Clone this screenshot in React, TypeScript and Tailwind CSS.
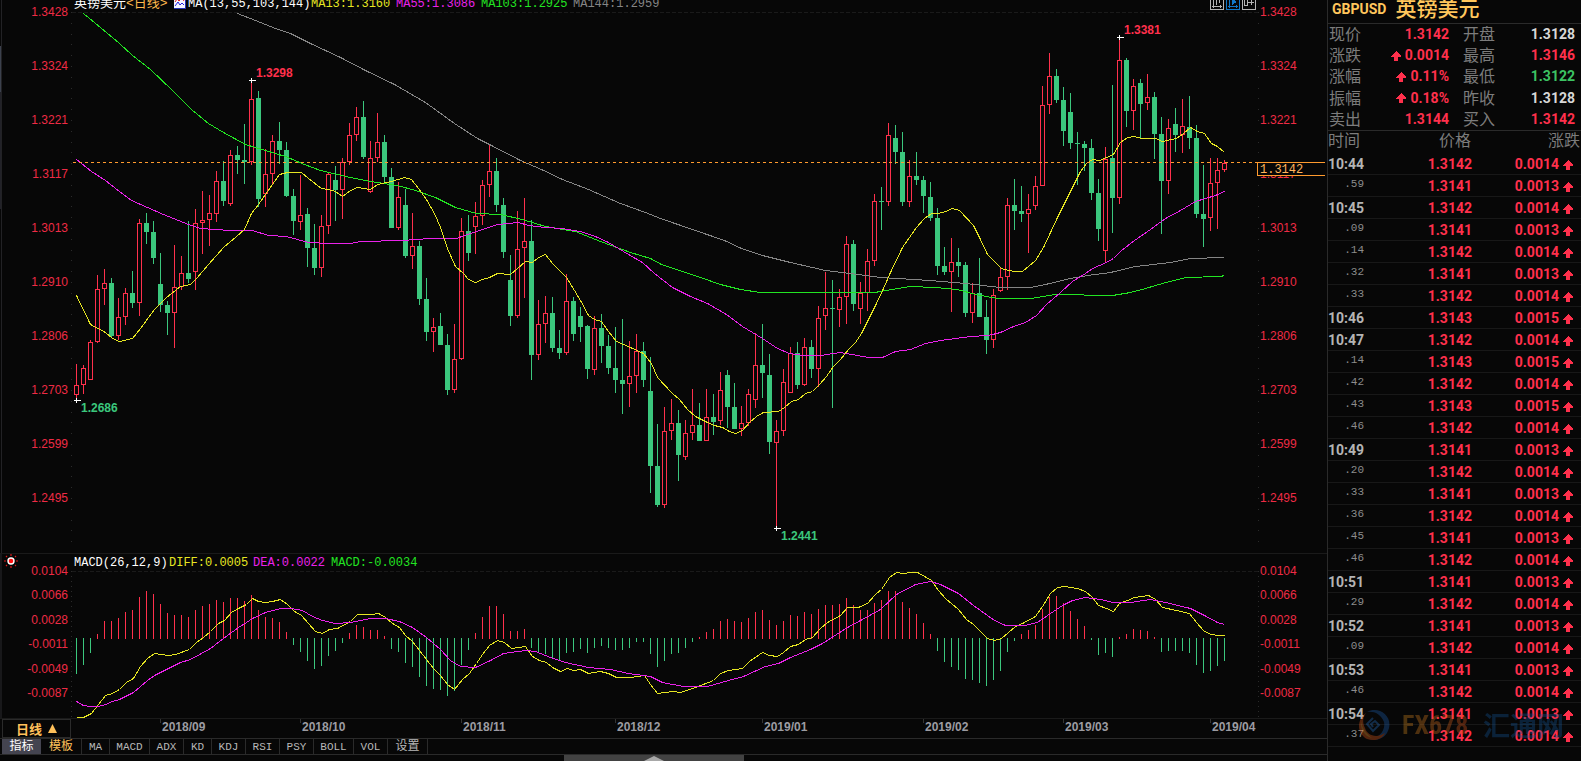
import { FC } from 'react';

type Candle = ['u' | 'd', number, number, number, number];
type Point = [number, number];

const FIRST_X = 76;
const STEP = 7;

const UP = '#ff304c';
const DOWN = '#3bc77d';
const BG = '#070707';

// direction, high, body top, body bottom, low
const candles: Candle[] = [
  ['u', 364, 385, 395, 398], ['u', 365, 368, 385, 394], ['u', 340, 342, 380, 380], ['u', 275, 289, 342, 343],
  ['u', 269, 283, 289, 305], ['d', 278, 283, 336, 337], ['u', 298, 317, 336, 340], ['u', 288, 293, 317, 325],
  ['d', 271, 293, 303, 308], ['u', 219, 223, 303, 316], ['d', 213, 223, 232, 244], ['d', 221, 232, 258, 264],
  ['d', 253, 284, 305, 312], ['d', 301, 305, 313, 335], ['u', 245, 287, 313, 348], ['u', 256, 273, 287, 290],
  ['d', 221, 273, 279, 283], ['u', 209, 223, 272, 290], ['u', 191, 220, 223, 254], ['u', 195, 213, 220, 246],
  ['u', 171, 181, 214, 222], ['d', 161, 181, 201, 206], ['u', 150, 155, 204, 206], ['d', 146, 155, 160, 174],
  ['d', 124, 160, 162, 184], ['u', 82, 99, 162, 165], ['d', 91, 98, 199, 207], ['u', 149, 174, 194, 207],
  ['u', 135, 141, 174, 185], ['d', 122, 141, 150, 164], ['d', 142, 150, 196, 197], ['d', 189, 196, 221, 235],
  ['u', 175, 215, 222, 230], ['d', 208, 214, 248, 267], ['d', 224, 248, 268, 275], ['u', 215, 226, 268, 277],
  ['u', 172, 174, 226, 234], ['d', 166, 180, 190, 221], ['u', 158, 162, 190, 219], ['u', 123, 135, 162, 165],
  ['u', 107, 117, 135, 141], ['d', 101, 117, 157, 159], ['u', 141, 158, 192, 193], ['u', 113, 142, 158, 162],
  ['d', 135, 142, 177, 183], ['d', 168, 177, 228, 228], ['u', 182, 197, 228, 230], ['d', 189, 205, 256, 258],
  ['u', 213, 246, 256, 269], ['d', 241, 246, 299, 305], ['d', 278, 299, 332, 341], ['u', 318, 327, 332, 352],
  ['d', 313, 326, 345, 345], ['d', 334, 345, 390, 395], ['u', 324, 359, 390, 393], ['u', 218, 231, 359, 360],
  ['d', 215, 231, 253, 261], ['u', 202, 216, 227, 254], ['u', 180, 185, 216, 225], ['u', 145, 171, 185, 197],
  ['d', 158, 171, 205, 212], ['d', 198, 205, 252, 258], ['d', 255, 280, 316, 326], ['u', 211, 249, 316, 318],
  ['u', 198, 241, 248, 298], ['d', 220, 241, 355, 380], ['u', 300, 324, 355, 360], ['u', 296, 313, 324, 343],
  ['d', 297, 313, 348, 352], ['d', 330, 348, 353, 359], ['u', 274, 301, 353, 355], ['d', 297, 301, 334, 341],
  ['d', 307, 316, 327, 342], ['d', 325, 326, 369, 379], ['u', 316, 328, 370, 375], ['d', 314, 328, 346, 363],
  ['d', 335, 346, 368, 374], ['d', 327, 368, 380, 393], ['d', 319, 380, 384, 414], ['u', 341, 376, 384, 407],
  ['u', 334, 351, 376, 393], ['d', 342, 351, 380, 387], ['d', 357, 391, 466, 493], ['d', 424, 466, 505, 507],
  ['u', 407, 431, 505, 508], ['u', 399, 423, 431, 440], ['d', 410, 423, 455, 481], ['u', 420, 433, 457, 460],
  ['u', 389, 425, 433, 440], ['d', 403, 425, 441, 441], ['u', 389, 417, 441, 441], ['d', 394, 417, 422, 435],
  ['u', 372, 390, 421, 425], ['d', 370, 375, 407, 428], ['d', 383, 407, 429, 429], ['u', 406, 423, 429, 436],
  ['u', 389, 394, 423, 426], ['u', 333, 365, 400, 408], ['d', 324, 365, 373, 398], ['d', 354, 375, 442, 454],
  ['u', 420, 431, 443, 527], ['u', 369, 382, 431, 436], ['u', 347, 353, 393, 393], ['d', 342, 353, 385, 389],
  ['u', 338, 347, 385, 386], ['d', 340, 347, 369, 378], ['u', 306, 318, 369, 387], ['u', 272, 308, 316, 330],
  ['d', 280, 308, 309, 408], ['u', 289, 297, 310, 327], ['u', 236, 244, 297, 324], ['d', 240, 244, 304, 311],
  ['u', 282, 293, 309, 324], ['u', 249, 261, 293, 311], ['u', 194, 201, 261, 266], ['d', 187, 201, 202, 230],
  ['u', 123, 135, 202, 206], ['d', 125, 138, 152, 164], ['d', 132, 152, 202, 206], ['u', 160, 176, 202, 207],
  ['d', 152, 176, 180, 185], ['d', 176, 180, 196, 213], ['d', 182, 197, 218, 221], ['d', 208, 218, 266, 275],
  ['d', 247, 266, 272, 275], ['u', 238, 262, 272, 312], ['d', 248, 262, 266, 277], ['d', 262, 265, 313, 317],
  ['u', 283, 293, 313, 323], ['d', 258, 293, 317, 317], ['d', 300, 317, 340, 354], ['u', 289, 295, 340, 348],
  ['u', 268, 277, 291, 292], ['u', 198, 205, 277, 290], ['d', 179, 205, 211, 230], ['d', 186, 211, 214, 222],
  ['u', 194, 209, 214, 253], ['u', 176, 186, 206, 210], ['u', 86, 105, 186, 186], ['u', 53, 76, 105, 114],
  ['d', 69, 76, 100, 103], ['d', 87, 100, 131, 146], ['d', 93, 112, 143, 149], ['d', 132, 143, 144, 185],
  ['d', 141, 144, 148, 171], ['d', 139, 148, 193, 200], ['d', 179, 193, 229, 241], ['u', 147, 159, 251, 263],
  ['d', 85, 158, 198, 233], ['u', 38, 60, 198, 204], ['d', 58, 60, 111, 127], ['u', 79, 86, 111, 130],
  ['d', 79, 83, 104, 138], ['u', 74, 97, 103, 110], ['d', 92, 97, 134, 159], ['d', 117, 134, 181, 234],
  ['u', 119, 128, 181, 194], ['d', 108, 124, 135, 152], ['u', 99, 126, 135, 153], ['d', 96, 127, 138, 149],
  ['d', 125, 138, 214, 218], ['d', 165, 214, 219, 247], ['u', 158, 183, 218, 231], ['u', 158, 170, 183, 229],
  ['u', 160, 163, 170, 172],
];

const ma13: Point[] = [
  [76, 295], [90, 324], [105, 332], [112, 338], [119, 341], [132, 338], [140, 328], [154, 309], [166, 297], [180, 286],
  [190, 284], [196, 278], [208, 264], [223, 247], [236, 236], [244, 229], [251, 213], [258, 204], [265, 194], [279, 174],
  [287, 172], [301, 172], [308, 178], [321, 188], [328, 189], [335, 191], [342, 196], [350, 190], [357, 187], [370, 189],
  [377, 184], [391, 181], [404, 177], [411, 179], [418, 188], [426, 199], [434, 213], [440, 227], [447, 248], [455, 266],
  [463, 273], [468, 279], [475, 282], [482, 279], [489, 277], [497, 273], [510, 274], [517, 268], [525, 261], [532, 262],
  [538, 257], [545, 254], [552, 263], [566, 277], [574, 290], [580, 300], [588, 315], [594, 319], [601, 321], [608, 331],
  [616, 341], [630, 347], [643, 353], [651, 363], [657, 377], [672, 393], [679, 399], [687, 409], [695, 416], [707, 422],
  [714, 425], [722, 427], [729, 431], [735, 433], [742, 430], [749, 422], [756, 416], [763, 412], [778, 411], [784, 407],
  [791, 401], [798, 399], [805, 393], [812, 391], [819, 384], [826, 376], [833, 366], [840, 359], [848, 349], [855, 342],
  [861, 333], [868, 319], [876, 303], [883, 288], [890, 272], [902, 247], [916, 227], [924, 218], [931, 213], [938, 213],
  [945, 211], [952, 208], [959, 210], [973, 225], [980, 239], [987, 254], [1001, 268], [1008, 270], [1015, 271],
  [1022, 271], [1035, 260], [1043, 247], [1050, 232], [1057, 217], [1064, 203], [1072, 187], [1080, 171], [1086, 163],
  [1092, 159], [1099, 160], [1106, 157], [1113, 154], [1120, 142], [1127, 137], [1134, 136], [1141, 138], [1155, 138],
  [1162, 141], [1176, 138], [1183, 133], [1190, 127], [1197, 131], [1204, 133], [1211, 143], [1217, 146], [1224, 152],
];

const ma55: Point[] = [
  [76, 159], [91, 171], [105, 180], [119, 191], [131, 200], [147, 207], [163, 214], [188, 224], [200, 228], [215, 229],
  [230, 230], [252, 230], [268, 235], [286, 236], [308, 242], [328, 243], [350, 243], [360, 241], [402, 240], [430, 238],
  [456, 238], [467, 234], [482, 229], [497, 224], [518, 222], [528, 225], [545, 227], [561, 228], [580, 231], [595, 236],
  [608, 242], [628, 254], [642, 262], [654, 273], [672, 287], [690, 296], [707, 303], [726, 314], [742, 326], [762, 338],
  [777, 348], [789, 353], [803, 355], [820, 355], [840, 352], [857, 355], [868, 357], [882, 357], [895, 351], [910, 349],
  [925, 343], [940, 340], [970, 336], [988, 335], [1000, 332], [1013, 326], [1025, 322], [1036, 315], [1046, 304],
  [1060, 292], [1072, 281], [1085, 273], [1092, 268], [1106, 262], [1113, 258], [1121, 250], [1134, 240], [1150, 229],
  [1165, 218], [1180, 210], [1195, 201], [1215, 195], [1224, 191],
];

const ma103: Point[] = [
  [83, 13], [100, 27], [119, 43], [132, 55], [150, 69], [172, 90], [191, 109], [208, 123], [223, 132], [245, 144],
  [265, 150], [285, 156], [304, 164], [320, 170], [337, 174], [350, 177], [370, 181], [397, 185], [415, 190], [435, 197],
  [455, 207], [476, 213], [500, 214], [522, 219], [545, 226], [575, 231], [600, 241], [630, 252], [650, 258], [661, 264],
  [685, 272], [700, 277], [720, 284], [740, 289], [760, 292], [820, 292], [874, 292], [892, 289], [910, 286], [935, 287],
  [957, 289], [975, 294], [997, 298], [1030, 298], [1055, 294], [1112, 295], [1130, 292], [1145, 288], [1162, 283],
  [1185, 277], [1220, 276], [1224, 275],
];

const ma144: Point[] = [
  [237, 13], [255, 20], [275, 28], [290, 33], [310, 43], [325, 50], [340, 57], [365, 70], [394, 84], [425, 102],
  [454, 123], [477, 138], [489, 144], [520, 160], [541, 169], [562, 179], [588, 189], [620, 203], [645, 212], [660, 218],
  [692, 229], [724, 240], [741, 248], [762, 255], [790, 262], [825, 270], [850, 273], [880, 277], [930, 280], [965, 283],
  [1000, 287], [1030, 287], [1045, 284], [1070, 278], [1087, 275], [1110, 272], [1135, 266], [1170, 262], [1190, 258],
  [1224, 257],
];

// end of each histogram bar; the zero line is at ZERO
const ZERO = 638;
const histogram = [
  674, 665, 653, 634, 621, 621, 618, 612, 610, 597, 591, 594, 604, 613, 615, 615, 617, 610, 606, 604, 600, 602, 598, 598,
  601, 595, 610, 617, 618, 622, 632, 645, 652, 661, 669, 666, 656, 651, 643, 633, 625, 627, 630, 630, 636, 649, 652, 663,
  667, 677, 686, 689, 690, 696, 691, 665, 650, 633, 617, 606, 606, 614, 631, 631, 629, 648, 653, 654, 659, 661, 653, 652,
  649, 653, 648, 646, 648, 650, 650, 648, 642, 642, 654, 667, 661, 654, 653, 648, 642, 637, 632, 629, 621, 619, 621, 622,
  618, 612, 610, 620, 625, 621, 615, 616, 612, 614, 609, 605, 605, 604, 598, 605, 610, 610, 603, 600, 591, 591, 602, 608,
  614, 623, 634, 651, 662, 667, 670, 679, 680, 683, 686, 680, 671, 652, 641, 634, 630, 625, 609, 597, 596, 603, 611, 619,
  626, 640, 655, 653, 657, 637, 634, 629, 630, 631, 637, 652, 651, 651, 651, 653, 665, 673, 671, 666, 661,
];

const diff: Point[] = [
  [76, 717], [83, 717], [91, 713], [98, 704], [105, 695], [112, 693], [119, 689], [126, 682], [133, 678], [140, 666],
  [147, 658], [154, 653], [168, 655], [175, 654], [189, 649], [196, 642], [203, 637], [210, 631], [218, 623], [224, 620],
  [231, 612], [238, 608], [246, 604], [252, 598], [258, 601], [265, 602], [272, 601], [280, 599], [287, 604], [294, 611],
  [301, 615], [315, 631], [322, 633], [329, 629], [337, 628], [350, 621], [357, 614], [371, 614], [378, 613], [385, 617],
  [392, 623], [399, 627], [405, 635], [412, 641], [419, 650], [433, 668], [440, 675], [447, 684], [454, 689], [462, 679],
  [469, 673], [476, 663], [482, 654], [489, 645], [497, 640], [504, 642], [511, 648], [525, 646], [532, 656], [539, 660],
  [546, 662], [552, 667], [560, 671], [567, 668], [573, 670], [580, 669], [588, 673], [600, 671], [608, 673], [616, 677],
  [630, 677], [644, 675], [650, 684], [657, 693], [672, 691], [680, 692], [695, 687], [713, 680], [720, 673], [728, 670],
  [742, 668], [749, 661], [762, 652], [769, 655], [777, 656], [783, 652], [790, 646], [798, 644], [805, 639], [812, 637],
  [820, 628], [827, 622], [840, 615], [847, 607], [858, 607], [867, 603], [875, 594], [881, 589], [889, 577], [896, 572],
  [903, 573], [910, 572], [917, 572], [924, 576], [931, 580], [938, 590], [945, 598], [958, 609], [966, 619], [973, 624],
  [980, 631], [987, 638], [994, 640], [1001, 638], [1008, 632], [1015, 626], [1022, 623], [1035, 616], [1042, 606],
  [1050, 593], [1057, 587], [1064, 586], [1077, 588], [1085, 591], [1092, 597], [1098, 605], [1106, 608], [1113, 611],
  [1119, 603], [1127, 600], [1134, 597], [1148, 595], [1155, 599], [1162, 607], [1176, 610], [1189, 613], [1196, 622],
  [1204, 631], [1211, 634], [1218, 635], [1224, 635],
];

const dea: Point[] = [
  [76, 701], [83, 705], [90, 706], [98, 706], [105, 704], [112, 701], [119, 699], [133, 692], [147, 680], [154, 675],
  [168, 668], [180, 662], [190, 659], [210, 648], [223, 638], [238, 627], [246, 622], [252, 618], [265, 612], [280, 608],
  [290, 608], [302, 610], [312, 616], [322, 620], [335, 623], [350, 622], [370, 618], [385, 618], [399, 621], [412, 627],
  [426, 637], [440, 649], [450, 660], [460, 666], [475, 667], [490, 660], [503, 653], [525, 650], [535, 651], [550, 657],
  [565, 662], [588, 667], [610, 669], [628, 673], [650, 676], [662, 682], [683, 686], [707, 686], [728, 680], [743, 676],
  [765, 666], [778, 663], [790, 657], [810, 649], [822, 643], [847, 627], [860, 620], [880, 609], [896, 594], [915, 584],
  [930, 581], [940, 584], [958, 593], [973, 605], [994, 620], [1005, 625], [1024, 625], [1037, 622], [1050, 613],
  [1062, 605], [1072, 600], [1085, 597], [1100, 599], [1113, 602], [1130, 602], [1150, 599], [1165, 602], [1190, 608],
  [1204, 615], [1217, 622], [1224, 624],
];

const marks = [
  { x: 251, y: 80, tx: 256, ty: 77, text: '1.3298', color: UP },
  { x: 76, y: 400, tx: 81, ty: 412, text: '1.2686', color: DOWN },
  { x: 1119, y: 37, tx: 1124, ty: 34, text: '1.3381', color: UP },
  { x: 776, y: 528, tx: 781, ty: 540, text: '1.2441', color: DOWN },
];

const priceTicks = ['1.3428', '1.3324', '1.3221', '1.3117', '1.3013', '1.2910', '1.2806', '1.2703', '1.2599', '1.2495'];
const macdTicks = ['0.0104', '0.0066', '0.0028', '-0.0011', '-0.0049', '-0.0087'];

const months = [
  { label: '', span: 89 },
  { label: '2018/09', span: 140 },
  { label: '2018/10', span: 161 },
  { label: '2018/11', span: 154 },
  { label: '2018/12', span: 147 },
  { label: '2019/01', span: 161 },
  { label: '2019/02', span: 140 },
  { label: '2019/03', span: 147 },
  { label: '2019/04', span: 117 },
];

const tabs = [
  { label: 'MA', width: 'w-7' },
  { label: 'MACD', width: 'w-10' },
  { label: 'ADX', width: 'w-[34px]' },
  { label: 'KD', width: 'w-7' },
  { label: 'KDJ', width: 'w-[34px]' },
  { label: 'RSI', width: 'w-[34px]' },
  { label: 'PSY', width: 'w-[34px]' },
  { label: 'BOLL', width: 'w-10' },
  { label: 'VOL', width: 'w-[34px]' },
];

const quotes = [
  { label: '现价', value: '1.3142', color: 'text-[#ff304c]' },
  { label: '开盘', value: '1.3128', color: 'text-[#d8d8d8]' },
  { label: '涨跌', value: '0.0014', color: 'text-[#ff304c]', arrow: true },
  { label: '最高', value: '1.3146', color: 'text-[#ff304c]' },
  { label: '涨幅', value: '0.11%', color: 'text-[#ff304c]', arrow: true },
  { label: '最低', value: '1.3122', color: 'text-[#3cc363]' },
  { label: '振幅', value: '0.18%', color: 'text-[#ff304c]', arrow: true },
  { label: '昨收', value: '1.3128', color: 'text-[#d8d8d8]' },
  { label: '卖出', value: '1.3144', color: 'text-[#ff304c]' },
  { label: '买入', value: '1.3142', color: 'text-[#ff304c]' },
];

const trades = [
  ['10:44', '1.3142', '0.0014'],
  ['.59', '1.3141', '0.0013'],
  ['10:45', '1.3142', '0.0014'],
  ['.09', '1.3141', '0.0013'],
  ['.14', '1.3142', '0.0014'],
  ['.32', '1.3141', '0.0013'],
  ['.33', '1.3142', '0.0014'],
  ['10:46', '1.3143', '0.0015'],
  ['10:47', '1.3142', '0.0014'],
  ['.14', '1.3143', '0.0015'],
  ['.42', '1.3142', '0.0014'],
  ['.43', '1.3143', '0.0015'],
  ['.46', '1.3142', '0.0014'],
  ['10:49', '1.3141', '0.0013'],
  ['.20', '1.3142', '0.0014'],
  ['.33', '1.3141', '0.0013'],
  ['.36', '1.3142', '0.0014'],
  ['.45', '1.3141', '0.0013'],
  ['.46', '1.3142', '0.0014'],
  ['10:51', '1.3141', '0.0013'],
  ['.29', '1.3142', '0.0014'],
  ['10:52', '1.3141', '0.0013'],
  ['.09', '1.3142', '0.0014'],
  ['10:53', '1.3141', '0.0013'],
  ['.46', '1.3142', '0.0014'],
  ['10:54', '1.3141', '0.0013'],
  ['.37', '1.3142', '0.0014'],
];

const Line: FC<{ points: Point[]; color: string }> = ({ points, color }) => (
  <polyline points={points.map(([x, y]) => `${x + 0.5},${y + 0.5}`).join(' ')} fill="none" stroke={color} />
);

const UpArrow: FC = () => (
  <svg width="10" height="10" viewBox="0 0 10 10" className="shrink-0" shapeRendering="crispEdges" aria-hidden="true">
    <path d="M5 0 L10 5 V6 H7 V10 H3 V6 H0 V5 Z" fill={UP} />
  </svg>
);

const PriceChart: FC = () => (
  <svg viewBox="71 12 1188 541" preserveAspectRatio="none" className="block w-full h-[541px]" shapeRendering="crispEdges">
    <path d="M72 12.5 H1258" stroke="#1a1a1a" strokeDasharray="4 2" />
    {Array.from({ length: 50 }, (_, i) => {
      const y = Math.round(12 + i * 10.8);
      const w = i % 5 === 0 ? 3 : 1;
      return (
        <g key={i} fill="#2a2a2a">
          <rect x={72 - w} y={y} width={w} height="1" />
          <rect x="1258" y={y} width="1" height="1" />
        </g>
      );
    })}
    {candles.map(([dir, high, top, bottom, low], i) => {
      const x = FIRST_X + i * STEP;
      const h = Math.max(1, bottom - top);
      return (
        <g key={i}>
          <rect x={x} y={high} width="1" height={low - high} fill={dir === 'u' ? UP : DOWN} />
          {dir === 'u' ? (
            <rect x={x - 1.5} y={top + 0.5} width="4" height={Math.max(1, h - 1)} fill={BG} stroke={UP} />
          ) : (
            <rect x={x - 2} y={top} width="5" height={h} fill={DOWN} />
          )}
        </g>
      );
    })}
    <Line points={ma144} color="#858585" />
    <Line points={ma103} color="#22e422" />
    <Line points={ma55} color="#ea22ea" />
    <Line points={ma13} color="#e6e622" />
    <path d="M73 162.5 H1258" stroke="#ff9a2e" strokeDasharray="3 3" />
    {marks.map((m) => (
      <g key={m.text}>
        <path d={`M${m.x - 2} ${m.y + 0.5} h7 M${m.x + 0.5} ${m.y - 2} v5`} stroke="#ffffff" />
        <text x={m.tx} y={m.ty} fill={m.color} className="text-[12px] font-bold">
          {m.text}
        </text>
      </g>
    ))}
  </svg>
);

const MacdChart: FC = () => (
  <svg viewBox="71 571 1188 147" preserveAspectRatio="none" className="block w-full h-[147px]" shapeRendering="crispEdges">
    <path d="M72 571.5 H1258" stroke="#1a1a1a" strokeDasharray="4 2" />
    <path d="M71.5 571 V718 M1258.5 571 V718" stroke="#2a2a2a" strokeDasharray="1 4" />
    {histogram.map((end, i) => (
      <rect
        key={i}
        x={FIRST_X + i * STEP}
        y={end < ZERO ? end : ZERO}
        width="1"
        height={end < ZERO ? ZERO + 1 - end : end - ZERO}
        fill={end < ZERO ? UP : DOWN}
      />
    ))}
    <Line points={diff} color="#e6e622" />
    <Line points={dea} color="#ea22ea" />
  </svg>
);

const ChartHeader: FC = () => (
  <div className="flex h-3 items-end justify-between overflow-hidden px-[3px]">
    <div className="flex items-end whitespace-nowrap font-['Liberation_Mono','Noto_Sans_CJK_SC',monospace] text-[12px] leading-[16px]">
      <span className="text-[13px] text-white">英镑美元</span>
      <span className="w-[48px] text-[13px] text-[#ffb94d]">&lt;日线&gt;</span>
      <svg width="12" height="12" viewBox="0 0 12 12" className="mb-[3px] mr-[2px] shrink-0" aria-hidden="true">
        <rect width="12" height="12" fill="#2430b4" />
        <rect width="11" height="11" fill="#f4f4ff" />
        <path d="M1 5 L3 2 L5 4 L8 1 L10 4" fill="none" stroke="#e02020" />
        <path d="M1 9 L4 5 L6 8 L8 6 L10 8" fill="none" stroke="#2020e0" />
      </svg>
      <span className="w-[123px] text-white">MA(13,55,103,144)</span>
      <span className="w-[85px] text-[#e6e622]">MA13:1.3160</span>
      <span className="w-[85px] text-[#ea22ea]">MA55:1.3086</span>
      <span className="w-[92px] text-[#22e422]">MA103:1.2925</span>
      <span className="text-[#858585]">MA144:1.2959</span>
    </div>
    <div className="flex gap-[2px] pb-[2px]">
      <button type="button" aria-label="缩放" className="h-[14px] w-[14px] border border-[#b5b5b5] text-[#b5b5b5]">
        <svg viewBox="0 0 12 12" shapeRendering="crispEdges">
          <path d="M2.5 0 V11 M1 9.5 H11 M5.5 8 V2 H8.5 V6 M9.5 8 V11" fill="none" stroke="currentColor" />
        </svg>
      </button>
      <button type="button" aria-label="播放" className="h-[14px] w-[14px] border border-[#1278c8] text-[#1278c8]">
        <svg viewBox="0 0 12 12" shapeRendering="crispEdges">
          <path d="M2.5 0 V11 M1 9.5 H11 M9.5 8 V11" fill="none" stroke="currentColor" />
          <path d="M5 1 L10 5 L5 8 Z" fill="currentColor" />
        </svg>
      </button>
      <button type="button" aria-label="平移" className="h-[14px] w-[14px] border border-[#b5b5b5] text-[#b5b5b5]">
        <svg viewBox="0 0 12 12" shapeRendering="crispEdges">
          <path d="M1.5 9 V3 M1 8.5 H5 M4.5 9 V1 M4 5.5 H11 M8.5 3 V8" fill="none" stroke="currentColor" />
        </svg>
      </button>
    </div>
  </div>
);

const PriceAxis: FC<{ side: 'left' | 'right' }> = ({ side }) => (
  <div
    className={`flex flex-col gap-[42px] pt-[6px] text-[12px] leading-[12px] text-[#ee2b45] ${
      side === 'left' ? 'items-end pr-[3px]' : 'items-start pl-px'
    }`}
  >
    {priceTicks.map((t) => (
      <span key={t}>{t}</span>
    ))}
  </div>
);

const MacdAxis: FC<{ side: 'left' | 'right' }> = ({ side }) => (
  <div
    className={`flex h-full flex-col justify-between pb-[19px] pt-[11px] text-[12px] leading-[12px] text-[#ee2b45] ${
      side === 'left' ? 'items-end pr-[3px]' : 'items-start pl-px'
    }`}
  >
    {macdTicks.map((t) => (
      <span key={t}>{t}</span>
    ))}
  </div>
);

const ChartPanel: FC = () => (
  <main className="flex min-w-0 flex-1 flex-col">
    {/* Price pane */}
    <section className="grid grid-cols-[71px_1fr_68px]">
      <div className="flex">
        <div className="w-[2px] shrink-0 border-r border-[#222225]">
          <div className="mt-[46px] h-[46px] bg-[#3c414d]" />
          <div className="h-[117px] bg-[#222228]" />
        </div>
        <div className="flex-1">
          <PriceAxis side="left" />
        </div>
      </div>
      <div className="min-w-0">
        <ChartHeader />
        <PriceChart />
      </div>
      <div className="relative">
        <PriceAxis side="right" />
        <div className="absolute -left-[2px] right-[2px] top-[162px] h-[14px] border border-r-0 border-[#ff9a2e] bg-[#070707] pl-[2px] font-['Liberation_Mono',monospace] text-[12px] leading-[14px] text-[#ffb45c]">
          1.3142
        </div>
      </div>
    </section>

    {/* MACD pane */}
    <section className="grid h-[166px] grid-cols-[71px_1fr_68px] border-y border-[#1a1a1a]">
      <div className="flex border-l-2 border-[#18181a]">
        <svg width="16" height="16" viewBox="0 0 16 16" className="shrink-0" aria-hidden="true">
          <circle cx="9" cy="7" r="3" fill="#ff1010" stroke="#ffffff" strokeWidth="1.4" />
          <path
            d="M9 0 V2 M9 12 V14 M2 7 H4 M14 7 H16 M4 2 L5 3 M13 11 L14 12 M14 2 L13 3 M4 12 L5 11"
            stroke="#e01818"
            strokeWidth="1.2"
          />
        </svg>
        <div className="h-full flex-1">
          <MacdAxis side="left" />
        </div>
      </div>
      <div className="min-w-0">
        <div className="flex h-[17px] whitespace-nowrap pl-[3px] font-['Liberation_Mono',monospace] text-[12px] leading-[19px]">
          <span className="w-[95px] text-white">MACD(26,12,9)</span>
          <span className="w-[84px] text-[#e6e622]">DIFF:0.0005</span>
          <span className="w-[78px] text-[#ea22ea]">DEA:0.0022</span>
          <span className="text-[#22e422]">MACD:-0.0034</span>
        </div>
        <MacdChart />
      </div>
      <MacdAxis side="right" />
    </section>

    {/* Time axis */}
    <div className="flex h-[19px]">
      <div className="w-[71px] shrink-0 pl-[2px]">
        <button
          type="button"
          className="flex h-full w-full items-center justify-center gap-[6px] border border-[#2a2a2a] font-['Noto_Sans_CJK_SC',sans-serif] text-[13px] font-bold leading-none text-[#ffc05a]"
        >
          日线
          <svg width="9" height="9" viewBox="0 0 9 9" aria-hidden="true">
            <path d="M4.5 0 L9 9 H0 Z" fill="#ffc05a" />
          </svg>
        </button>
      </div>
      <div className="grid flex-1" style={{ gridTemplateColumns: months.map((m) => `${m.span}fr`).join(' ') }}>
        {months.map((m) => (
          <div key={m.span + m.label} className="flex text-[12px] font-bold leading-[16px] text-[#9c9ca2]">
            {m.label && <i className="mr-px h-1 w-px bg-[#333333]" />}
            {m.label}
          </div>
        ))}
      </div>
    </div>

    {/* Indicator tabs */}
    <nav className="flex h-[17px] border-y border-[#2a2a2a] pl-[2px] font-['Liberation_Mono','Noto_Sans_CJK_SC',monospace] text-[11px] leading-[14px] text-[#b8b8b8]">
      <button type="button" className="w-[39px] bg-[#444450] text-[12px] text-white">
        指标
      </button>
      <button type="button" className="w-[41px] border-r border-[#2a2a2a] text-[12px] text-[#ffc05a]">
        模板
      </button>
      {tabs.map((t) => (
        <button key={t.label} type="button" className={`border-r border-[#2a2a2a] ${t.width}`}>
          {t.label}
        </button>
      ))}
      <button type="button" className="w-10 border-r border-[#2a2a2a] text-[12px]">
        设置
      </button>
    </nav>

    <div className="flex h-[6px] justify-center">
      <button type="button" aria-label="展开" className="-ml-[19px] flex h-full w-[180px] justify-center bg-[#424242]">
        <svg width="20" height="6" viewBox="0 0 20 6">
          <path d="M0 6 L10 1 L20 6 Z" fill="#a8a8a8" />
        </svg>
      </button>
    </div>
  </main>
);

const Watermark: FC = () => (
  <div className="pointer-events-none absolute bottom-5 right-[17px] flex items-center opacity-35" aria-hidden="true">
    <svg width="32" height="32" viewBox="0 0 32 32" className="mr-3">
      <path d="M9 3 C20 -3 34 6 31 19 C29 28 20 33 11 30 C20 30 28 22 26 13 C23 5 16 2 9 3 Z" fill="#1c5fae" />
      <path d="M8 4 C-2 11 -1 25 9 30 C18 33 25 29 27 24 C18 30 9 26 7 19 C4 13 5 8 8 4 Z" fill="#e05a1c" />
      <path d="M3 12 C2 20 6 27 14 29 C9 25 4 20 3 12 Z" fill="#f0a030" />
      <path d="M15 9 L9 15 L15 22 L21 16 L17 12 L13 15 L15 18" fill="none" stroke="#2670c0" strokeWidth="2" />
    </svg>
    <span className="w-[81px] bg-linear-to-r from-[#d08a20] to-[#d8401c] bg-clip-text font-['Roboto_Condensed','Liberation_Sans_Narrow','Roboto',sans-serif] text-[26px] font-bold leading-[32px] text-transparent">
      FX678
    </span>
    <span className="font-['Noto_Sans_CJK_SC',sans-serif] text-[27px] font-bold leading-[32px] text-[#145596]">汇通网</span>
  </div>
);

const QuotePanel: FC = () => (
  <aside className="relative w-[254px] shrink-0 border-l border-[#2a2a2a] font-['Roboto','Noto_Sans_CJK_SC',sans-serif]">
    <h1 className="flex h-[23px] items-center gap-[9px] pb-[5px] pl-1 font-bold text-[#ffc65c]">
      <span className="text-[14px] leading-[18px]">GBPUSD</span>
      <span className="text-[21px] font-medium leading-[18px]">英镑美元</span>
    </h1>

    <dl className="grid h-[108px] grid-cols-[120px_1fr] gap-x-[14px] border-y border-[#2a2a2a] pl-px pr-[6px]">
      {quotes.map((q) => (
        <div key={q.label} className="flex h-[21px] items-center justify-between">
          <dt className="text-[16px] leading-[21px] text-[#7c7c7c]">{q.label}</dt>
          <dd className={`flex items-center gap-1 text-[14px] font-bold leading-[21px] ${q.color}`}>
            {q.arrow && <UpArrow />}
            {q.value}
          </dd>
        </div>
      ))}
    </dl>

    <table className="w-full table-fixed border-separate border-spacing-0">
      <colgroup>
        <col className="w-[36px]" />
        <col />
        <col className="w-[109px]" />
      </colgroup>
      <thead>
        <tr className="text-[16px] leading-[19px] text-[#7c7c7c]">
          <th className="whitespace-nowrap p-0 pb-[3px] text-left font-normal">时间</th>
          <th className="p-0 pb-[3px] pr-px text-right font-normal">价格</th>
          <th className="p-0 pb-[3px] pr-px text-right font-normal">涨跌</th>
        </tr>
      </thead>
      <tbody>
        {trades.map(([time, price, change], i) => (
          <tr
            key={i}
            className="text-[14px] font-bold leading-[19px] text-[#ff304c] [&>td]:h-[22px] [&>td]:border-b [&>td]:border-[#181818]"
          >
            {time.startsWith('.') ? (
              <td className="p-0 pb-[3px] text-right font-['Liberation_Mono',monospace] text-[11px] font-normal leading-[18px] text-[#8c8c8c]">
                {time}
              </td>
            ) : (
              <td className="p-0 pt-[2px] text-[#b4b4b4]">{time}</td>
            )}
            <td className="p-0 pt-[2px] text-right">{price}</td>
            <td className="p-0 pr-2 pt-[2px]">
              <div className="flex items-center justify-end gap-1">
                {change}
                <UpArrow />
              </div>
            </td>
          </tr>
        ))}
      </tbody>
    </table>

    <Watermark />
  </aside>
);

const App: FC = () => (
  <div className="flex min-h-screen overflow-hidden bg-[#070707] font-['Liberation_Sans',Arial,sans-serif]">
    <ChartPanel />
    <QuotePanel />
  </div>
);

export default App;
